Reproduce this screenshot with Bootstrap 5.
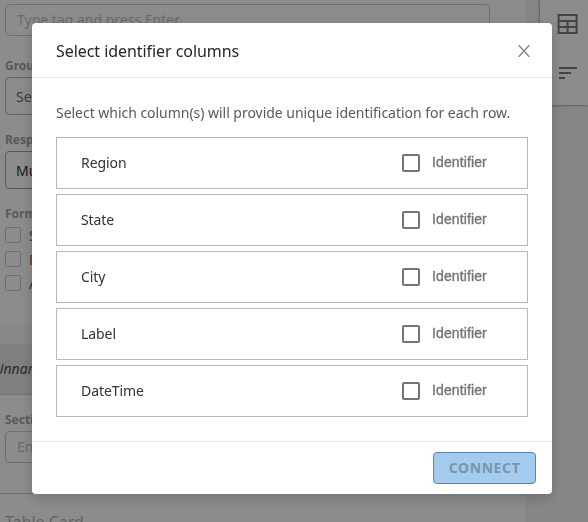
<!DOCTYPE html>
<html lang="en">
<head>
<meta charset="utf-8">
<meta name="viewport" content="width=device-width, initial-scale=1">
<title>Select identifier columns</title>
<link href="https://cdn.jsdelivr.net/npm/bootstrap@5.3.0/dist/css/bootstrap.min.css" rel="stylesheet">
<style>
body{font-family:"Noto Sans","Open Sans",sans-serif;font-size:14px;line-height:20px;background:#f5f5f5;height:522px;overflow:hidden}
.page{height:522px}
.editor{width:525px;background:#fff;height:522px}
.fields{padding:4px 0 0 5px;height:324px}
.box{border:1px solid #ccc;border-radius:4px;width:485px;padding-left:11px;white-space:nowrap;overflow:hidden}
.box-input{height:32px;line-height:30px;color:#c4c4c4}
.box-select{height:38px;line-height:38px;padding-left:10px;color:#707070;border-color:#b4b4b4;margin-top:4px}
.box-select.chosen{color:#333;border-color:#a0a0a0;margin-top:3px}
.field-label{font-size:12px;font-weight:700;line-height:16px;color:#a4a4a4}
.label-group{margin-top:22px;margin-bottom:-1px}
.label-response{margin-top:17px}
.label-format{margin-top:17px;margin-bottom:5px}
.tick{width:16px;height:16px;border:1px solid #ccc;border-radius:2px}
.tick-row{height:24px;gap:8px;color:#666;line-height:18px}
.band{height:20px;background:#f7f7f7}
.section-title{height:51px;background:#e9e9e9;border-bottom:1px solid #d0d0d0;font-style:italic;line-height:50px;color:#505050;text-indent:-6px}
.section-fields{padding:17px 0 0 5px;height:99px;border-bottom:1px solid #c8c8c8}
.section-fields .box{margin-top:3px}
.card-title-text{font-size:16px;line-height:22px;color:#b4b4b4;padding:17px 0 0 5px}
.tools{width:48px;height:105px;background:#fff;box-shadow:0 0 3px rgba(0,0,0,.55);padding:14px 0 0 17px}
.tools svg{display:block}
.tools svg+svg{margin-top:33px}
.shade{background:rgba(0,0,0,.45)}
.picker{width:520px;height:471px;margin:23px 0 0 32px;border-radius:4px;background:#fff;box-shadow:0 4px 14px rgba(0,0,0,.2)}
.picker .modal-header{height:55px;padding:1px 21px 0 24px;border-bottom:1px solid #e6e6e6}
.picker .modal-title{font-size:16px;font-weight:400;line-height:24px;color:#262626;letter-spacing:-.06px;padding-top:1px}
.picker .modal-body{padding:25px 24px 0}
.picker .hint{color:#595959;line-height:20px;margin-bottom:14px;white-space:nowrap;letter-spacing:-.03px}
.rows{gap:5px}
.pick-row{height:52px;border:1px solid #b9b9b9;padding:0 40px 0 24px;color:#333;letter-spacing:-.08px}
.pick-check{width:85px;gap:12px;font:14px/18px "Liberation Sans",Arial,sans-serif;color:#757575;letter-spacing:.12px}
.pick-check span{padding-bottom:2px;-webkit-text-stroke:.35px #757575}
.pick-check .form-check-input{width:18px;height:18px;margin:0;border:2px solid #757575;border-radius:2px;flex:none;background-color:#fff}
.picker .modal-footer{height:53px;padding:0 16px;border-top:1px solid #e6e6e6}
.picker .modal-footer>*{margin:0}
.btn-connect{width:103px;height:32px;padding:0;border-radius:4px;font-size:14px;font-weight:700;letter-spacing:.6px;line-height:30px}
.btn-connect:disabled{opacity:1;background:#a3cbed;border:1px solid #5587ac;color:#7896ae}
</style>
<script src="https://cdn.jsdelivr.net/npm/bootstrap@5.3.0/dist/js/bootstrap.bundle.min.js"></script>
</head>
<body>
<div class="page d-flex justify-content-between align-items-start">
  <main class="editor">
    <div class="fields">
      <div class="box box-input">Type tag and press Enter</div>
      <div class="field-label label-group">Group</div>
      <div class="box box-select">Select</div>
      <div class="field-label label-response">Response</div>
      <div class="box box-select chosen">Multiple</div>
      <div class="field-label label-format">Format</div>
      <div class="tick-row d-flex"><span class="tick"></span>S</div>
      <div class="tick-row d-flex"><span class="tick"></span>M</div>
      <div class="tick-row d-flex"><span class="tick"></span>A</div>
    </div>
    <div class="band"></div>
    <div class="section-title">Unnamed</div>
    <div class="section-fields">
      <div class="field-label">Section</div>
      <div class="box box-input">Enter</div>
    </div>
    <div class="card-title-text">Table Card</div>
  </main>
  <aside class="tools">
    <svg width="22" height="20" viewBox="0 0 22 20" fill="none" stroke="#7c7c7c" stroke-width="2"><path d="M1.600 1h18v18h-18zM1.600 7h18M1.600 13h18M10.600 7v12"/></svg>
    <svg width="22" height="12" viewBox="0 0 22 12" fill="#7c7c7c"><path d="M2 0h18v2H2zM2 5h12v2H2zM2 10h6v2H2z"/></svg>
  </aside>
</div>
<div class="shade position-fixed top-0 start-0 w-100 h-100">
  <div class="picker modal-content border-0" role="dialog" aria-label="Select identifier columns">
    <div class="modal-header">
      <h5 class="modal-title">Select identifier columns</h5>
      <svg width="14" height="14" viewBox="0 0 14 14" fill="none" stroke="#858585" stroke-width="1.400"><path d="M1.700 1.200 12.300 12.800M12.300 1.200 1.700 12.800"/></svg>
    </div>
    <div class="modal-body">
      <p class="hint">Select which column(s) will provide unique identification for each row.</p>
      <div class="rows d-flex flex-column">
        <div class="pick-row d-flex align-items-center justify-content-between">Region<label class="pick-check d-flex align-items-center"><input class="form-check-input" type="checkbox"><span>Identifier</span></label></div>
        <div class="pick-row d-flex align-items-center justify-content-between">State<label class="pick-check d-flex align-items-center"><input class="form-check-input" type="checkbox"><span>Identifier</span></label></div>
        <div class="pick-row d-flex align-items-center justify-content-between">City<label class="pick-check d-flex align-items-center"><input class="form-check-input" type="checkbox"><span>Identifier</span></label></div>
        <div class="pick-row d-flex align-items-center justify-content-between">Label<label class="pick-check d-flex align-items-center"><input class="form-check-input" type="checkbox"><span>Identifier</span></label></div>
        <div class="pick-row d-flex align-items-center justify-content-between">DateTime<label class="pick-check d-flex align-items-center"><input class="form-check-input" type="checkbox"><span>Identifier</span></label></div>
      </div>
    </div>
    <div class="modal-footer">
      <button class="btn btn-connect" disabled>CONNECT</button>
    </div>
  </div>
</div>
</body>
</html>
